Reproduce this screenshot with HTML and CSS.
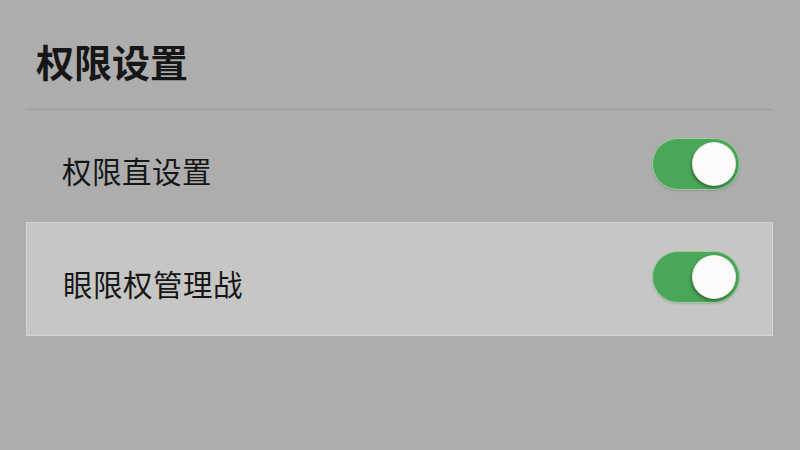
FILE: index.html
```html
<!DOCTYPE html>
<html lang="zh-CN">
<head>
<meta charset="utf-8">
<title>权限设置</title>
<link rel="stylesheet" href="styles.css">
</head>
<body>
<div class="page">
  <header class="header">
    <h1 class="title">权限设置</h1>
  </header>
  <div class="row">
    <span class="label">权限直设置</span>
    <span class="toggle on"><span class="knob"></span></span>
  </div>
  <div class="row active">
    <span class="label">眼限权管理战</span>
    <span class="toggle on"><span class="knob"></span></span>
  </div>
</div>
</body>
</html>
```

FILE: styles.css
```css
html, body {
  margin: 0;
  padding: 0;
  background: #adadad;
  width: 800px;
  height: 450px;
  overflow: hidden;
  font-family: "Noto Sans CJK SC", "Noto Sans", sans-serif;
  color: #161616;
}
.page {
  padding: 0 27px 0 26px;
}
.header {
  height: 109px;
  border-bottom: 1px solid #9b9b9b;
  box-sizing: content-box;
}
.title {
  margin: 0;
  padding: 41px 0 0 10px;
  font-size: 38px;
  line-height: 40px;
  font-weight: 700;
  letter-spacing: 0;
}
.row {
  height: 112px;
  display: flex;
  align-items: center;
  justify-content: space-between;
  padding: 0 33px 0 36px;
  box-sizing: border-box;
}
.row.active {
  height: 114px;
  background: #c6c6c5;
  border: 1px solid #d3d3d2;
  padding: 0 32px 0 36px;
}
.label {
  font-size: 29.5px;
  line-height: 32px;
  margin-top: 8px;
  letter-spacing: 0.5px;
}
.toggle {
  position: relative;
  width: 86px;
  height: 50px;
  border-radius: 26px;
  background: #4aa757;
  border: 1px solid #9fcca5;
  box-shadow: 0 1px 2px rgba(0,0,0,0.15);
  margin-top: -4px;
}
.knob {
  position: absolute;
  top: 3px;
  right: 3px;
  width: 44px;
  height: 44px;
  border-radius: 50%;
  background: #fbfbf9;
  box-shadow: -1px 2px 3px rgba(0,0,0,0.35), inset 0 0 0 1px rgba(0,0,0,0.06);
}
```
